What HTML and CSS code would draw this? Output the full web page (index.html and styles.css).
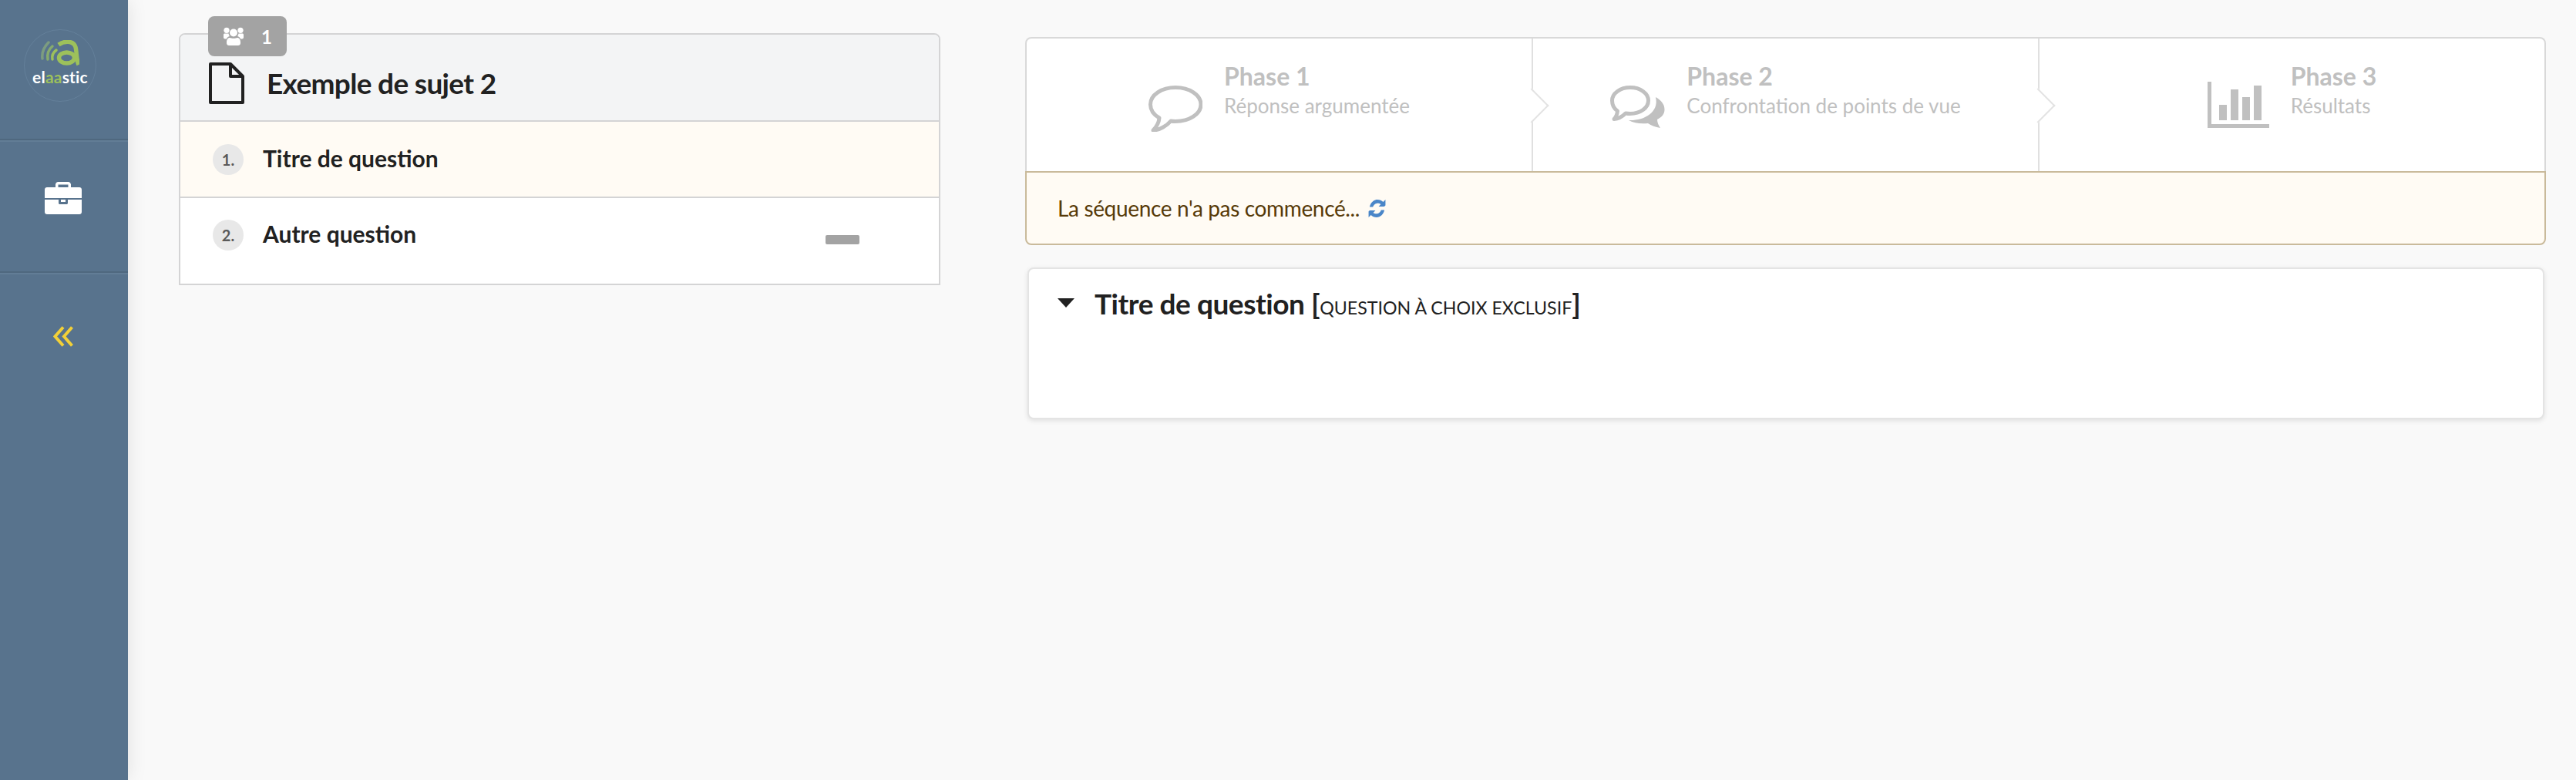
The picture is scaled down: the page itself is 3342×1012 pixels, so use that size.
FILE: index.html
```html
<!DOCTYPE html>
<html lang="fr">
<head>
<meta charset="utf-8">
<title>elaastic</title>
<link rel="stylesheet" href="styles.css">
</head>
<body>
<div class="app">
  <nav class="sidebar">
    <div class="side-item side-logo">
      <div class="logo-circle">
        <svg class="logo-mark" viewBox="0 0 50 34" aria-hidden="true">
          <path class="wave wave-far" d="M10 3C4 9 1 16 2 24"/>
          <path class="wave wave-mid" d="M15 8C10 12 8 18 9 25"/>
          <path class="wave wave-near" d="M20 13C16 16 14 20 15 25"/>
          <path class="logo-a" d="M23 6C30 1 42 0 45 9C46.500 14 46 26 49 32"/>
          <ellipse class="logo-a" cx="33.500" cy="23" rx="10" ry="7"/>
        </svg>
        <div class="logo-text">el<span class="logo-green">aa</span>stic</div>
      </div>
    </div>
    <div class="side-item side-case">
      <svg class="case-icon" viewBox="0 0 48 42" aria-hidden="true">
        <path d="M14 7V3.500C14 1.600 15.600 0 17.500 0H30.500C32.400 0 34 1.600 34 3.500V7H45C46.700 7 48 8.300 48 10V21H0V10C0 8.300 1.300 7 3 7ZM17.500 7H30.500V3.500H17.500Z" fill-rule="evenodd"/>
        <path d="M0 23H18V27.500C18 28.400 18.700 29 19.500 29H28.500C29.300 29 30 28.400 30 27.500V23H48V39C48 40.700 46.700 42 45 42H3C1.300 42 0 40.700 0 39Z"/>
        <path d="M21 23H27V26H21Z"/>
      </svg>
    </div>
    <div class="side-item side-collapse">
      <svg class="collapse-icon" viewBox="0 0 26 27" aria-hidden="true">
        <path d="M13 1.500L2.500 13.500L13 25.500M24.500 1.500L14 13.500L24.500 25.500"/>
      </svg>
    </div>
  </nav>

  <main class="content">
    <section class="left-col">
      <div class="subject">
        <div class="badge">
          <svg class="users-icon" viewBox="0 0 26 24" aria-hidden="true">
            <circle cx="4" cy="4.300" r="3.600"/><circle cx="22" cy="4.300" r="3.600"/><circle cx="13" cy="7.500" r="5"/>
            <path d="M0 10C0 8.800 0.800 8.500 2 8.500H6.500C6.800 10 7.300 11 8 12C6 12.500 4.500 13.500 4 15.500H2C0.800 15.500 0 14.800 0 13.500Z"/>
            <path d="M26 10C26 8.800 25.200 8.500 24 8.500H19.500C19.200 10 18.700 11 18 12C20 12.500 21.500 13.500 22 15.500H24C25.200 15.500 26 14.800 26 13.500Z"/>
            <path d="M8 14C10.500 15 15.500 15 18 14C20.500 14 22 16.500 22 20V21C22 23 20.500 24 19 24H7C5.500 24 4 23 4 21V20C4 16.500 5.500 14 8 14Z"/>
          </svg>
          <span>1</span>
        </div>
        <header class="subject-head">
          <svg class="file-icon" viewBox="0 0 46 54" aria-hidden="true">
            <path d="M2 2H28L44 18V52H2Z"/><path d="M28 2V18H44"/>
          </svg>
          <h1>Exemple de sujet 2</h1>
        </header>
        <div class="question question-active">
          <span class="num">1.</span>
          <span class="q-title">Titre de question</span>
        </div>
        <div class="question">
          <span class="num">2.</span>
          <span class="q-title">Autre question</span>
          <span class="q-pill"></span>
        </div>
      </div>
    </section>

    <section class="right-col">
      <div class="phases-box">
        <div class="phases">
          <div class="phase">
            <svg class="phase-icon icon-one" viewBox="0 0 70 60" aria-hidden="true">
              <path d="M35 2.500C53 2.500 68 12 68 24.500C68 37 53 46.500 35 46.500C33 46.500 31 46.400 29 46C24 52 14 58 6 58C10 54 13.500 48 14 42C7 38 2.500 32 2.500 24.500C2.500 12 17 2.500 35 2.500Z"/>
            </svg>
            <div class="phase-text">
              <div class="phase-title">Phase 1</div>
              <div class="phase-sub">Réponse argumentée</div>
            </div>
          </div>
          <div class="phase">
            <svg class="phase-icon icon-two" viewBox="0 0 71 56" aria-hidden="true">
              <path class="bubble-line" d="M26 2.500C39 2.500 49.500 10 49.500 19.500C49.500 29 39 36.500 26 36.500C24 36.500 22 36.300 20 36C16 40 11 43 5 43.500C7.500 41 9 37.500 9.500 33C5 30 2.500 25 2.500 19.500C2.500 10 13 2.500 26 2.500Z"/>
              <path class="bubble-fill" d="M59 15C66 19 70.500 24 70.500 31C70.500 37 67 41 61 44C61 48 63 52 65 55C59 54 53 52 49 49C40 50 31 49 24 45C42 46 64 36 59 15Z"/>
            </svg>
            <div class="phase-text">
              <div class="phase-title">Phase 2</div>
              <div class="phase-sub">Confrontation de points de vue</div>
            </div>
          </div>
          <div class="phase">
            <svg class="phase-icon icon-three" viewBox="0 0 80 60" aria-hidden="true">
              <path d="M0 0H5V55H80V60H0Z"/>
              <rect x="15" y="30" width="10" height="20"/>
              <rect x="30" y="10" width="10" height="40"/>
              <rect x="45" y="20" width="10" height="30"/>
              <rect x="60" y="5" width="10" height="45"/>
            </svg>
            <div class="phase-text">
              <div class="phase-title">Phase 3</div>
              <div class="phase-sub">Résultats</div>
            </div>
          </div>
        </div>
        <div class="status">
          <span>La séquence n'a pas commencé...</span>
          <svg class="sync-icon" viewBox="0 0 24 24" aria-hidden="true">
            <path d="M20.500 9.500H14L16.700 6.800C14.600 4.900 11 5 9 6.900C7.800 8 7.200 9 6.900 10H2.800C3.800 5 7.700 1 12.500 1C15.300 1 17.800 2 19.600 3.800L22.500 1V8C22.500 8.800 21.300 9.500 20.500 9.500Z"/>
            <path d="M3.500 14.500H10L7.300 17.200C9.400 19.100 13 19 15 17.100C16.200 16 16.800 15 17.100 14H21.200C20.200 19 16.300 23 11.500 23C8.700 23 6.200 22 4.400 20.200L1.500 23V16C1.500 15.200 2.700 14.500 3.500 14.500Z"/>
          </svg>
        </div>
      </div>

      <article class="q-card">
        <span class="caret"></span>
        <h2>Titre de question <span class="q-type">[<span class="q-type-label">Question à choix exclusif</span>]</span></h2>
      </article>
    </section>
  </main>
</div>
</body>
</html>
```

FILE: styles.css
```css
* { box-sizing: border-box; }

html, body { margin: 0; height: 100%; }

body {
  background: #f9f9f9;
  color: #212121;
  font-family: Lato, "Liberation Sans", sans-serif;
  overflow: hidden;
}

.app { display: flex; height: 1012px; }

/* Sidebar */
.sidebar {
  flex: 0 0 166px;
  background: #58738d;
  box-shadow: 0 0 24px rgba(0, 0, 0, 0.1);
  display: flex;
  flex-direction: column;
  z-index: 1;
}

.side-item {
  display: flex;
  justify-content: center;
  align-items: center;
  padding-right: 2px;
  border-bottom: 2px solid #4f687f;
  box-shadow: 0 2px 0 #627d96;
}

.side-logo { height: 182px; padding: 0 10px 48px 0; align-items: flex-end; }

.logo-circle {
  width: 94px;
  height: 94px;
  border: 1px solid #64809a;
  border-radius: 50%;
  display: flex;
  flex-direction: column;
  align-items: center;
  padding-top: 13px;
}

.logo-mark {
  width: 50px;
  height: 34px;
  flex: none;
  fill: none;
  stroke: #9dc15b;
  stroke-linecap: round;
}

.wave { stroke-width: 3.500; }
.wave-far { stroke: #7c9c80; }
.wave-mid { stroke: #87ab6d; }
.wave-near { stroke: #9dc15b; }
.logo-a { stroke-width: 5.500; stroke-linecap: butt; }

.logo-text {
  color: #fff;
  font-size: 21px;
  font-weight: 700;
  line-height: 20px;
  margin-top: 4px;
  letter-spacing: 0.2px;
}

.logo-green { color: #9dc15b; }

.side-case { height: 172px; padding-bottom: 20px; }

.case-icon { width: 48px; height: 42px; fill: #fff; }

.side-collapse {
  border: 0;
  box-shadow: none;
  height: 168px;
  padding-bottom: 4px;
}

.collapse-icon {
  width: 26px;
  height: 27px;
  fill: none;
  stroke: #f2d038;
  stroke-width: 4;
}

/* Content */
.content {
  flex: 1;
  display: flex;
  align-items: flex-start;
  padding-left: 66px;
}

.left-col { flex: 0 0 988px; padding-top: 43px; }

.right-col { flex: 0 0 1973px; margin-left: 110px; padding-top: 48px; }

/* Subject card */
.subject {
  position: relative;
  background: #fff;
  border: 2px solid #d4d4d5;
  border-radius: 8px 8px 0 0;
}

.badge {
  position: absolute;
  top: -24px;
  left: 36px;
  width: 102px;
  height: 52px;
  background: #a3a3a3;
  border-radius: 8px;
  color: #fff;
  font-size: 24px;
  font-weight: 700;
  display: flex;
  align-items: center;
  gap: 23px;
  padding-left: 20px;
}

.users-icon { width: 26px; height: 24px; fill: #fff; }

.subject-head {
  height: 113px;
  background: #f3f4f5;
  border-bottom: 2px solid #d4d4d5;
  border-radius: 6px 6px 0 0;
  display: flex;
  align-items: center;
  padding: 15px 0 0 37px;
}

.file-icon {
  width: 46px;
  height: 54px;
  fill: none;
  stroke: #212121;
  stroke-width: 4;
  stroke-linejoin: round;
}

h1 {
  margin: 0 0 0 29px;
  font-size: 37px;
  font-weight: 700;
  line-height: 44px;
  letter-spacing: -0.67px;
}

.question {
  position: relative;
  display: flex;
  align-items: flex-start;
  padding: 29px 0 0 42px;
  border-bottom: 2px solid #d4d4d5;
  height: 99px;
}

.question:last-child { border-bottom: 0; height: 111px; padding-top: 28px; }

.question-active { background: #fffbf4; }

.num {
  width: 40px;
  height: 40px;
  background: #e8e8e8;
  border-radius: 50%;
  color: #5a5a5a;
  font-size: 20px;
  font-weight: 700;
  line-height: 40px;
  text-align: center;
  flex: none;
}

.q-title {
  margin-left: 25px;
  font-size: 30px;
  font-weight: 700;
  line-height: 36px;
}

.q-pill {
  position: absolute;
  left: 837px;
  top: 48px;
  width: 44px;
  height: 12px;
  background: #a3a3a3;
  border-radius: 2px;
}

/* Phases */
.phases {
  display: flex;
  height: 174px;
  background: #fff;
  border: 2px solid #d9d9d9;
  border-bottom: 0;
  border-radius: 8px 8px 0 0;
}

.phase {
  position: relative;
  flex: 1;
  display: flex;
  align-items: flex-start;
  justify-content: center;
  gap: 28px;
  border-right: 2px solid #e0e0e0;
  padding-top: 29px;
}

.phase:last-child { border-right: 0; }

.phase:not(:last-child)::after {
  content: "";
  position: absolute;
  right: -16px;
  top: 71px;
  width: 30px;
  height: 30px;
  background: #fff;
  border-top: 2px solid #e3e3e3;
  border-right: 2px solid #e3e3e3;
  transform: rotate(45deg);
  z-index: 1;
}

.phase-icon { margin-top: 32px; flex: none; }

.icon-one {
  width: 70px;
  height: 60px;
  fill: none;
  stroke: #c0c0c0;
  stroke-width: 5;
  stroke-linejoin: round;
}

.icon-two { width: 71px; height: 56px; }

.bubble-line { fill: none; stroke: #c0c0c0; stroke-width: 5; stroke-linejoin: round; }
.bubble-fill { fill: #c0c0c0; }

.icon-three { width: 80px; height: 60px; fill: #c0c0c0; margin-top: 27px; }

.phase-title {
  color: #c0c0c0;
  font-size: 32px;
  font-weight: 700;
  line-height: 40px;
}

.phase-sub {
  color: #c0c0c0;
  font-size: 26px;
  line-height: 36px;
}

/* Status */
.status {
  height: 96px;
  background: #fffbf4;
  border: 2px solid #c9ba9b;
  border-radius: 0 0 8px 8px;
  color: #573a08;
  font-size: 28px;
  letter-spacing: -0.35px;
  display: flex;
  align-items: center;
  padding-left: 40px;
  gap: 10px;
}

.sync-icon { width: 25px; height: 25px; fill: #4a86c8; }

/* Question card */
.q-card {
  position: relative;
  width: 1968px;
  margin-left: 3px;
  height: 197px;
  margin-top: 29px;
  background: #fff;
  border: 2px solid #e4e4e4;
  border-radius: 8px;
  box-shadow: 0 2px 6px rgba(0, 0, 0, 0.1);
  padding: 23px 0 0 85px;
}

.caret {
  position: absolute;
  left: 37px;
  top: 38px;
  border-left: 11px solid transparent;
  border-right: 11px solid transparent;
  border-top: 12px solid #212121;
}

h2 {
  margin: 0;
  font-size: 37px;
  font-weight: 700;
  line-height: 44px;
  letter-spacing: -0.45px;
}

.q-type-label {
  font-size: 23.200px;
  font-weight: 400;
  letter-spacing: 0;
  text-transform: uppercase;
}
```
